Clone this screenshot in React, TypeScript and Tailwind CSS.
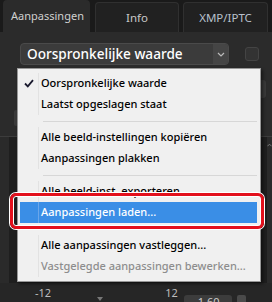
import React from 'react';

type Item = { label: string; checked?: boolean; active?: boolean; disabled?: boolean } | 'sep';

const items: Item[] = [
    { label: 'Oorspronkelijke waarde', checked: true },
    { label: 'Laatst opgeslagen staat' },
    'sep',
    { label: 'Alle beeld-instellingen kopiëren' },
    { label: 'Aanpassingen plakken' },
    'sep',
    { label: 'Alle beeld-inst. exporteren...' },
    { label: 'Aanpassingen laden...', active: true },
    'sep',
    { label: 'Alle aanpassingen vastleggen...' },
    { label: 'Vastgelegde aanpassingen bewerken...', disabled: true },
];

const Check = () => (
    <svg width="10" height="9" viewBox="0 0 10 9" className="block ml-[4px]">
        <path d="M1 4.5 L3.8 7.4 L9 1.2" fill="none" stroke="#1a1a2e" strokeWidth="1.8" />
    </svg>
);

const App: React.FC = () => {
    return (
        <div className="relative w-[272px] h-[302px] overflow-hidden bg-[#1a1a1a] font-['Noto_Sans','Open_Sans',sans-serif] flex flex-col">
            {/* Tabs */}
            <div className="flex h-[32px] shrink-0">
                <div className="ml-[3px] w-[87px] rounded-t-[4px] bg-[#2b2b2b] flex items-center justify-center pl-[2px] text-[11px] text-[#d0d0d0]">
                    Aanpassingen
                </div>
                <div className="ml-[5px] mt-[2px] w-[84px] rounded-t-[4px] bg-[#212121] border border-b-0 border-[#303030] flex items-center justify-center text-[11.5px] text-[#c8c8c8]">
                    Info
                </div>
                <div className="ml-[4px] mt-[2px] w-[85px] rounded-t-[4px] bg-[#212121] border border-b-0 border-[#303030] flex items-center justify-center text-[11.5px] text-[#b8c0cc]">
                    XMP/IPTC
                </div>
            </div>

            {/* Panel */}
            <div className="flex-1 bg-[#2b2b2b] flex flex-col">
                <div className="flex items-center pt-[11px] h-[33px] shrink-0">
                    <div className="ml-[20px] w-[209px] h-[22px] rounded-[4px] bg-[#3b3b3b] border border-[#4a4a4a] flex items-center overflow-hidden">
                        <span className="flex-1 pl-[6px] text-[13.6px] font-medium text-white leading-none">Oorspronkelijke waarde</span>
                        <span className="w-[15px] h-full bg-[#454545] flex items-center justify-center">
                            <svg width="8" height="5" viewBox="0 0 8 5">
                                <path d="M1 1 L4 4 L7 1" fill="none" stroke="#bbb" strokeWidth="1.2" />
                            </svg>
                        </span>
                    </div>
                    <div className="ml-[16px] w-[14px] h-[14px] rounded-[3px] bg-[#333] border border-[#444]" />
                </div>
                <div className="h-[71px] shrink-0 flex justify-between">
                    <div className="mt-[45px] ml-[14px] w-[4px] h-[16px] rounded-[2px] bg-[#3a3a3a]" />
                    <div className="mt-[15px] mr-[6px] w-[7px] h-[18px] rounded-[3px] bg-[#3a3a3a]" />
                </div>
                <div className="h-px bg-[#3c3c3c] shrink-0" />
                <div className="h-[146px] shrink-0 flex">
                    <div className="w-[9px] bg-[#2a2a2a]" />
                    <div className="flex-1 bg-[#1e1e1e]" />
                    <div className="w-[5px] bg-[#2a2a2a] flex justify-center pt-[6px]">
                        <svg width="6" height="4" viewBox="0 0 6 4"><path d="M0.5 3.5 L3 1 L5.5 3.5" fill="none" stroke="#888" /></svg>
                    </div>
                </div>
                <div className="flex-1 bg-[#262626] flex items-start text-[11px] text-[#bdbdbd]">
                    <span className="ml-[35px] mt-[2px]">-12</span>
                    <span className="ml-[46px] mt-[14px] w-0 h-0 border-l-[3px] border-r-[3px] border-t-[4px] border-l-transparent border-r-transparent border-t-[#777]" />
                    <span className="ml-[62px] mt-[2px]">12</span>
                    <span className="ml-[6px] mt-[12px] w-[48px] h-[14px] rounded-[3px] bg-[#3c3c3c] text-[#ccc] pl-[14px] leading-[14px]">1.60</span>
                    <span className="ml-[5px] mt-[12px] w-[9px] h-[12px] rounded-[2px] bg-[#4a4a4a]" />
                </div>
            </div>

            {/* Context menu */}
            <div className="absolute left-[17px] top-[68px] w-[244px] h-[214px] bg-[#f0f0f0] border border-[#979797] shadow-[2px_2px_3px_rgba(0,0,0,0.45)] pt-[4px] pl-[2px] pr-[3px] text-[11px]">
                {items.map((it, i) =>
                    it === 'sep' ? (
                        <div key={i} className="h-[12px] flex items-center pl-[23px]">
                            <div className="flex-1 h-px bg-[#d7d7d7]" />
                        </div>
                    ) : (
                        <div
                            key={i}
                            className={
                                it.active
                                    ? 'h-[21px] flex items-center bg-[#3a8ee6] text-white'
                                    : it.disabled
                                      ? 'h-[21px] flex items-center text-[#8d8d8d]'
                                      : 'h-[21px] flex items-center text-black'
                            }
                        >
                            <div className="w-[18px] shrink-0">{it.checked && <Check />}</div>
                            <div className={it.active ? 'w-px h-full shrink-0 bg-[#6aa6ea]' : 'w-px h-full shrink-0 bg-[#e2e2e2]'} />
                            <span className="pl-[2px] whitespace-nowrap font-medium">{it.label}</span>
                        </div>
                    ),
                )}
            </div>

            {/* Annotation */}
            <div className="absolute left-[10px] top-[193px] w-[254px] h-[36px] rounded-[6px] border-[3px] border-[#e3101c] shadow-[0_0_0_1px_#fff,inset_0_0_0_1px_#fff]" />
        </div>
    );
};

export default App;
